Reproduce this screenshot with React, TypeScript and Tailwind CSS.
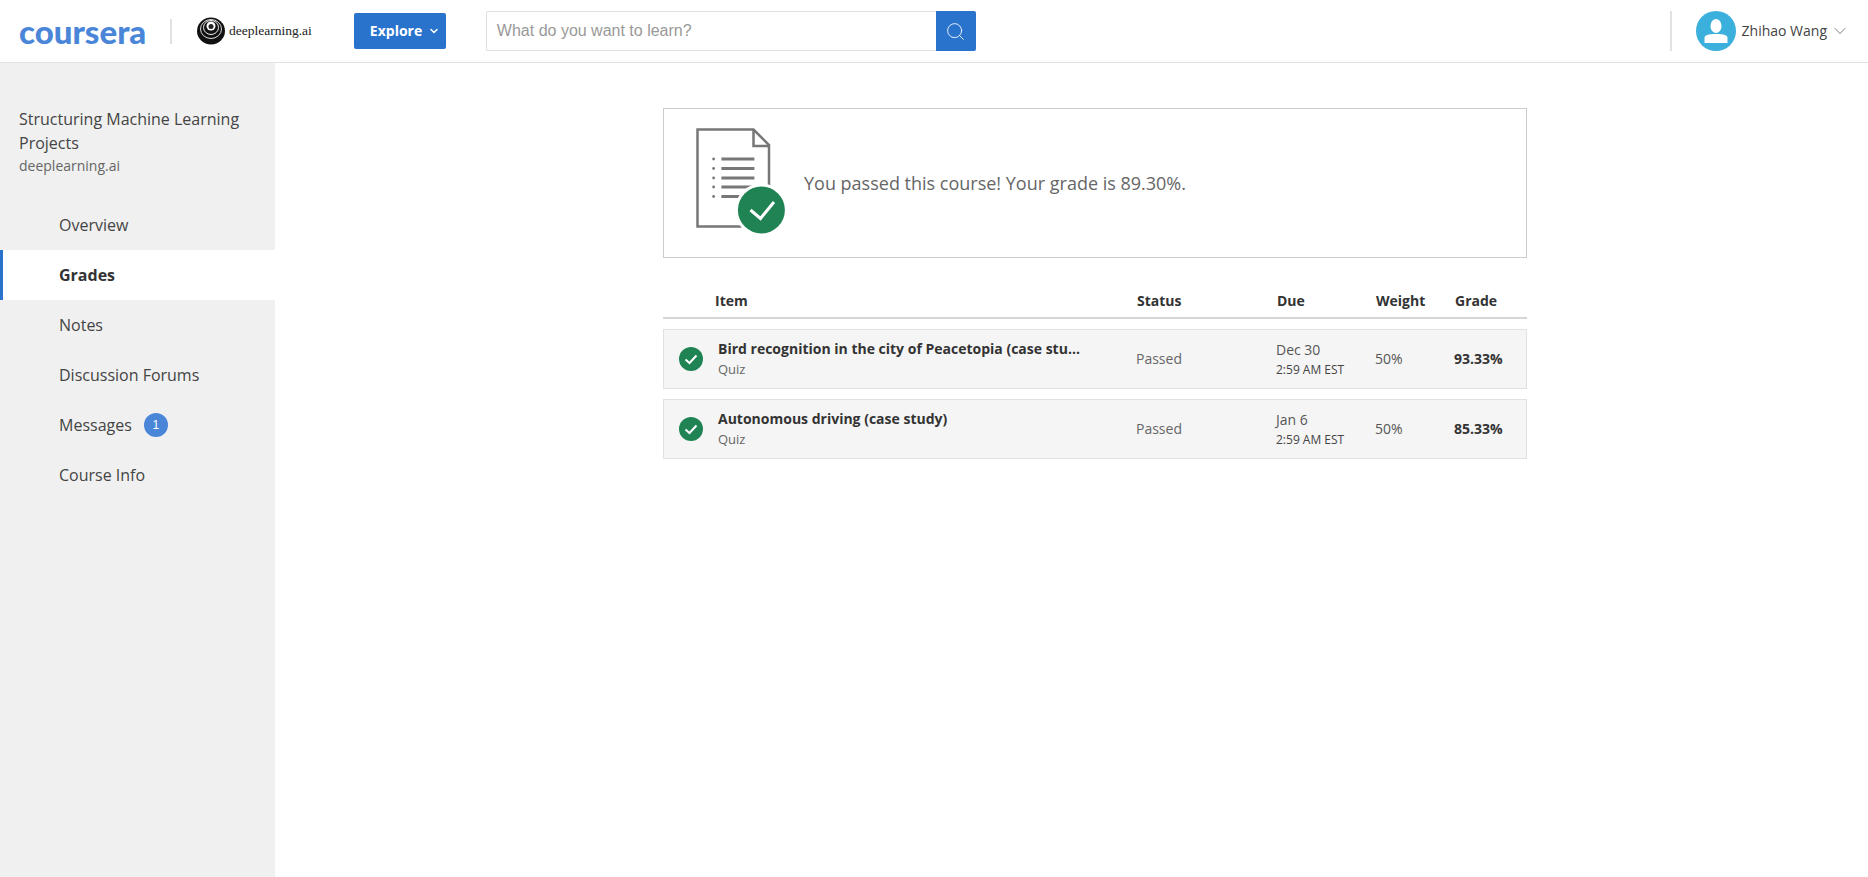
import React from 'react';
import { ChevronDown, Search } from 'lucide-react';

const navItems = ['Overview', 'Grades', 'Notes', 'Discussion Forums', 'Messages', 'Course Info'];

const rows = [
  { title: 'Bird recognition in the city of Peacetopia (case stu...', date: 'Dec 30', grade: '93.33%' },
  { title: 'Autonomous driving (case study)', date: 'Jan 6', grade: '85.33%' },
];

const DlaiMark = () => (
  <svg width="30" height="28" viewBox="0 0 30 28">
    <ellipse cx="15" cy="14" rx="14" ry="13.5" fill="#111" />
    <ellipse cx="15" cy="12" rx="10.5" ry="9.5" fill="none" stroke="#ddd" strokeWidth="1" />
    <ellipse cx="15" cy="10.5" rx="7.5" ry="7" fill="none" stroke="#eee" strokeWidth="1" />
    <circle cx="15" cy="9" r="4.5" fill="#fff" />
    <circle cx="15" cy="9.5" r="2.5" fill="#222" />
  </svg>
);

const PassedDoc = () => (
  <svg width="98" height="112" viewBox="0 0 98 112" className="shrink-0">
    <path d="M7.5 2.5H63.5L79 18V99.5H7.5Z" fill="none" stroke="#777" strokeWidth="2.5" />
    <path d="M63.5 2.5V19H79" fill="none" stroke="#777" strokeWidth="2.5" />
    {[32, 41.5, 51, 60, 69.5].map((y) => (
      <g key={y}>
        <circle cx="23.6" cy={y} r="1.4" fill="#777" />
        <rect x="31.4" y={y - 1.5} width="33" height="3" fill="#777" />
      </g>
    ))}
    <circle cx="71.4" cy="83" r="26.5" fill="#fff" />
    <circle cx="71.4" cy="83" r="23.5" fill="#1f8354" />
    <path d="M60.5 83L70.5 91.5L84 75" fill="none" stroke="#fff" strokeWidth="3" />
  </svg>
);

const CheckBadge = () => (
  <svg width="24" height="24" viewBox="0 0 24 24" className="shrink-0">
    <circle cx="12" cy="12" r="12" fill="#1f8354" />
    <path d="M6.5 12.5L10.5 16L17.5 8.5" fill="none" stroke="#fff" strokeWidth="2" />
  </svg>
);

const UserAvatar = () => (
  <svg width="40" height="40" viewBox="0 0 40 40" className="shrink-0">
    <circle cx="20" cy="20" r="20" fill="#3bb0dc" />
    <ellipse cx="20" cy="15" rx="5.5" ry="7" fill="#fff" />
    <path d="M8.5 32V27C8.5 24 12 23 20 23C28 23 31.5 24 31.5 27V32Z" fill="#fff" />
  </svg>
);

export default function App() {
  return (
    <div className="flex h-screen flex-col overflow-hidden bg-white text-[#444]" style={{ fontFamily: '"Open Sans", sans-serif' }}>
      <header className="flex h-[63px] shrink-0 items-center border-b border-[#e1e1e1] pl-[19px]">
        <span className="w-[127px] text-[33px] leading-none font-black text-[#4a86d8]" style={{ fontFamily: 'Lato, sans-serif' }}>coursera</span>
        <div className="ml-[24px] h-[25px] w-[2px] bg-[#e1e1e1]" />
        <div className="ml-[24px] flex items-center gap-[3px]">
          <DlaiMark />
          <span className="text-[13.5px] text-[#222]" style={{ fontFamily: '"Liberation Serif", serif' }}>deeplearning.ai</span>
        </div>
        <button className="ml-[42px] flex h-[36px] w-[92px] items-center gap-[6px] rounded-[2px] bg-[#2a73cc] pl-[16px] text-sm font-bold text-white">
          Explore
          <ChevronDown size={12} strokeWidth={3} />
        </button>
        <div className="ml-[40px] flex h-[40px] w-[490px]">
          <div className="flex flex-1 items-center rounded-l-[2px] border border-r-0 border-[#e1e1e1] pl-[10px] text-base text-[#999]" style={{ fontFamily: '"Liberation Sans", sans-serif' }}>
            What do you want to learn?
          </div>
          <div className="flex w-[40px] items-center justify-center rounded-r-[2px] bg-[#2a73cc]">
            <Search size={21} strokeWidth={1} className="text-white" />
          </div>
        </div>
        <div className="ml-auto flex items-center">
          <div className="h-[40px] w-[2px] bg-[#e1e1e1]" />
          <div className="ml-[24px]"><UserAvatar /></div>
          <span className="ml-[6px] text-sm text-[#444]">Zhihao Wang</span>
          <ChevronDown size={20} strokeWidth={1} className="mr-[18px] ml-[3px] text-[#666]" />
        </div>
      </header>

      <div className="flex min-h-0 flex-1">
        <aside className="w-[275px] shrink-0 bg-[#f0f0f0] pt-[44px]">
          <div className="px-[19px]">
            <div className="text-base leading-6 text-[#444]">Structuring Machine Learning Projects</div>
            <div className="mt-px text-sm leading-5 text-[#666]">deeplearning.ai</div>
          </div>
          <nav className="mt-[24px]">
            {navItems.map((item) =>
              item === 'Grades' ? (
                <div key={item} className="flex h-[50px] items-center border-l-[3px] border-[#2a73cc] bg-white pl-[56px] text-base font-bold text-[#333]">
                  {item}
                </div>
              ) : (
                <div key={item} className="flex h-[50px] items-center gap-[12px] pl-[59px] text-base text-[#444]">
                  {item}
                  {item === 'Messages' && (
                    <span className="flex h-[24px] w-[24px] items-center justify-center rounded-full bg-[#4a86d8] text-xs text-white" style={{ fontFamily: '"Liberation Sans", sans-serif' }}>1</span>
                  )}
                </div>
              ),
            )}
          </nav>
        </aside>

        <main className="flex-1 pt-[45px] pl-[388px]">
          <div className="w-[864px]">
            <div className="flex h-[150px] items-center border border-[#ccc] pl-[26px]">
              <PassedDoc />
              <span className="ml-[16px] text-[18px] text-[#666]">You passed this course! Your grade is 89.30%.</span>
            </div>

            <div className="grid h-[61px] grid-cols-[474px_140px_99px_79px_1fr] items-end border-b-2 border-[#d5d5d5] pb-[6px] text-sm font-bold text-[#333]">
              <div className="pl-[52px]">Item</div>
              <div>Status</div>
              <div>Due</div>
              <div>Weight</div>
              <div>Grade</div>
            </div>

            {rows.map((row) => (
              <div key={row.title} className="mt-[10px] grid h-[60px] grid-cols-[472px_140px_99px_79px_1fr] items-center border border-[#e1e1e1] bg-[#f5f5f5] text-sm">
                <div className="flex items-center gap-[15px] pl-[15px]">
                  <CheckBadge />
                  <div className="w-[362px]">
                    <div className="leading-5 font-bold whitespace-nowrap text-[#333]">{row.title}</div>
                    <div className="text-[13px] leading-5 text-[#666]">Quiz</div>
                  </div>
                </div>
                <div className="text-[#666]">Passed</div>
                <div className="pt-[2px]">
                  <div className="leading-5 text-[#555]">{row.date}</div>
                  <div className="text-xs leading-5 text-[#444]">2:59 AM EST</div>
                </div>
                <div className="text-[#555]">50%</div>
                <div className="font-bold text-[#333]">{row.grade}</div>
              </div>
            ))}
          </div>
        </main>
      </div>
    </div>
  );
}
